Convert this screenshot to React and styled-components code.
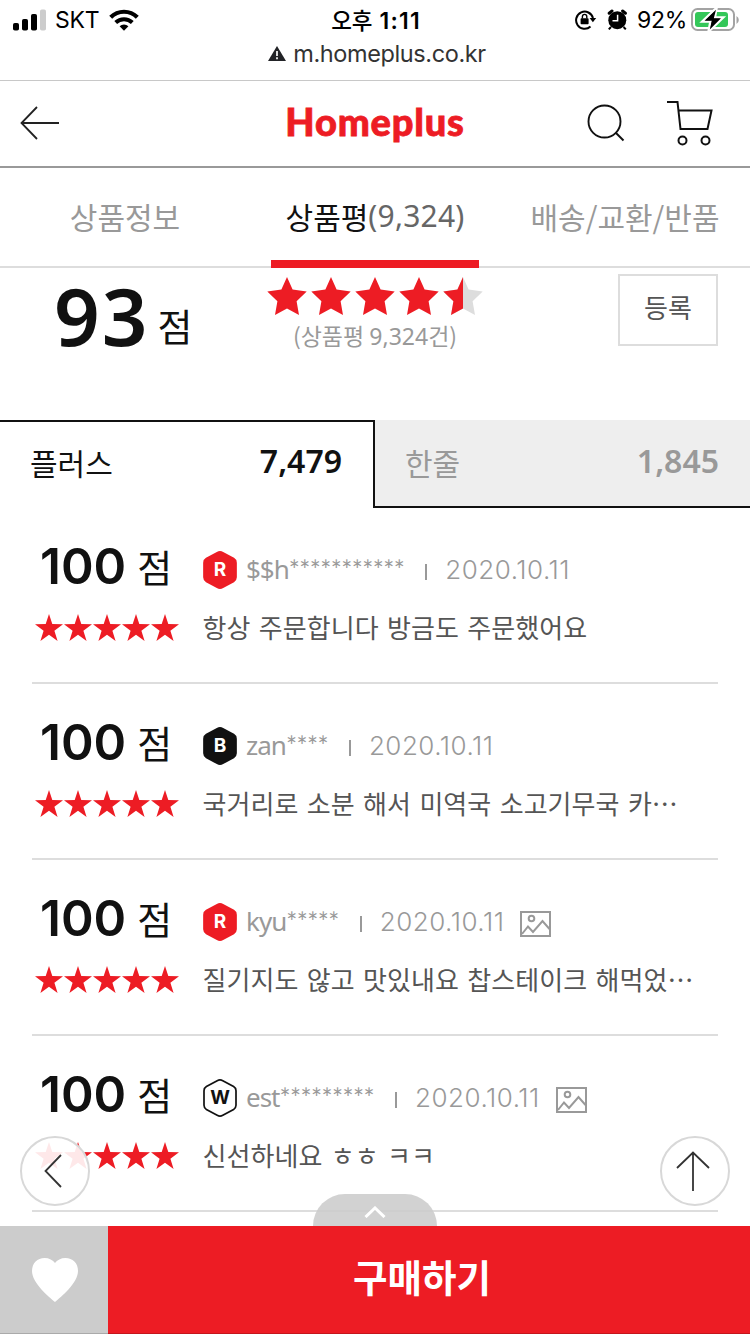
import styled, { createGlobalStyle, css } from 'styled-components'

const colors = {
	red: '#ed1c24',
	black: '#111',
	text: '#555',
	muted: '#999',
	line: '#ddd',
}

const kr = `'Noto Sans CJK KR', sans-serif`

const reviews = [
	{ grade: 'R', name: '$$h', hidden: 11, text: '항상 주문합니다 방금도 주문했어요' },
	{ grade: 'B', name: 'zan', hidden: 4, text: '국거리로 소분 해서 미역국 소고기무국 카⋯' },
	{
		grade: 'R',
		name: 'kyu',
		hidden: 5,
		photo: true,
		text: '질기지도 않고 맛있내요 찹스테이크 해먹었⋯',
	},
	{ grade: 'W', name: 'est', hidden: 9, photo: true, text: '신선하네요 ㅎㅎ ㅋㅋ' },
]

const starPoints = '14,0 17.3,10.1 28,10.3 19.4,16.7 22.6,27 14,20.8 5.4,27 8.6,16.7 0,10.3 10.7,10.1'
const bigStar = '20,0 25.6,12.4 39.7,14.4 29.6,24.2 32,38 20,31.4 8,38 10.4,24.2 0.3,14.4 14.4,12.4'

function SignalIcon() {
	return (
		<svg width="34" height="22" viewBox="0 0 34 22">
			<rect x="0" y="14" width="6" height="7.5" rx="1.8" />
			<rect x="9" y="10" width="6" height="11.5" rx="1.8" />
			<rect x="18" y="5" width="6" height="16.5" rx="1.8" />
			<rect x="27" y="0.5" width="6" height="21" rx="1.8" fill="#ccc" />
		</svg>
	)
}

function WifiIcon() {
	return (
		<svg width="30" height="22" viewBox="0 0 30 22">
			<path d="M1.7 8.2a19 19 0 0 1 26.6 0" fill="none" stroke="#000" strokeWidth="4.2" />
			<path d="M6.7 13.5a12 12 0 0 1 16.6 0" fill="none" stroke="#000" strokeWidth="4" />
			<path d="M10.6 17.3a6.6 6.6 0 0 1 8.8 0L15 21.8z" />
		</svg>
	)
}

function LockIcon() {
	return (
		<svg width="22" height="22" viewBox="0 0 22 22">
			<path d="M15.5 17.6A8.6 8.6 0 1 1 18 9" fill="none" stroke="#000" strokeWidth="2" />
			<path d="M14.6 9h6.6l-3.3 4.2z" />
			<rect x="5.6" y="9.2" width="8" height="6" rx="0.8" />
			<path d="M7.4 9.5V7.6a2.2 2.2 0 0 1 4.4 0v1.9" fill="none" stroke="#000" strokeWidth="1.4" />
		</svg>
	)
}

function AlarmIcon() {
	return (
		<svg width="21" height="22" viewBox="0 0 21 22">
			<circle cx="10.3" cy="11.2" r="9" />
			<path d="M2.2 4.2 5 2M18.400 4.200 15.600 2" stroke="#000" strokeWidth="3" strokeLinecap="round" />
			<path d="m4 18-2.2 2.4M16.6 18l2.2 2.4" stroke="#000" strokeWidth="2" />
			<path d="M10.6 5.8v6H5.5" fill="none" stroke="#fff" strokeWidth="1.5" />
		</svg>
	)
}

function BatteryIcon() {
	return (
		<svg width="48" height="24" viewBox="0 0 48 24">
			<rect x="1" y="1" width="42" height="21" rx="5.5" fill="none" stroke="#a3a3a3" strokeWidth="2" />
			<path d="M45.5 8v8a4.6 4.6 0 0 0 0-8z" fill="#a3a3a3" />
			<rect x="4" y="4" width="33" height="15" rx="3" fill="#34c759" />
			<path d="M25.5 0 11.5 13.5h8L17.6 23.5 32 9.5h-8.2z" stroke="#fff" strokeWidth="2.6" />
			<path d="M25 1.8 13.5 12.8h7.3L18.8 21.5 30 10.3h-7.2z" />
		</svg>
	)
}

function Stars({ half }) {
	if (half) {
		return (
			<svg width="216" height="38" viewBox="0 0 216 38">
				{[0, 1, 2, 3].map((i) => (
					<polygon key={i} points={bigStar} fill={colors.red} transform={`translate(${i * 44} 0)`} />
				))}
				<polygon points={bigStar} fill="#ddd" transform="translate(176 0)" />
				<path d="M196 0v31.4L184 38l2.4-13.8-10.1-9.8 14.1-2z" fill={colors.red} />
			</svg>
		)
	}
	return (
		<svg width="144" height="27" viewBox="0 0 144 27">
			{[0, 1, 2, 3, 4].map((i) => (
				<polygon key={i} points={starPoints} fill={colors.red} transform={`translate(${i * 29} 0)`} />
			))}
		</svg>
	)
}

function PhotoIcon() {
	return (
		<svg width="31" height="26" viewBox="0 0 31 26" fill="none" stroke={colors.muted} strokeWidth="2">
			<rect x="1" y="1" width="29" height="24" />
			<circle cx="11.5" cy="7.5" r="2.8" />
			<path d="m2 23 6-7.5 5 5.5 9.5-11L29.5 18" />
		</svg>
	)
}

function Badge({ grade }) {
	const fill = { R: colors.red, B: colors.black, W: '#fff' }[grade]
	const outline = grade === 'W'
	return (
		<Grade $outline={outline}>
			<svg width="34" height="38" viewBox="0 0 34 38">
				<path
					d="M14.2 1.7Q17 .2 19.8 1.7L30.6 7.6Q33 9 33 11.7V26.3Q33 29 30.6 30.4L19.8 36.3Q17 37.8 14.2 36.3L3.4 30.4Q1 29 1 26.3V11.7Q1 9 3.4 7.6Z"
					fill={fill}
					stroke={outline ? colors.black : fill}
					strokeWidth="1.7"
				/>
			</svg>
			<span>{grade}</span>
		</Grade>
	)
}

function Review({ grade, name, hidden, photo, text }) {
	return (
		<Row>
			<Score>
				<strong>100</strong>
				<span>점</span>
			</Score>
			<Meta>
				<Badge grade={grade} />
				<Name>{name}</Name>
				<Mask>{'*'.repeat(hidden)}</Mask>
				<Bar />
				<time>2020.10.11</time>
				{photo && <PhotoIcon />}
			</Meta>
			<StarCell>
				<Stars />
			</StarCell>
			<Comment>{text}</Comment>
		</Row>
	)
}

export default function App() {
	return (
		<Page>
			<GlobalStyle />
			<Status>
				<Carrier>
					<SignalIcon />
					<span>SKT</span>
					<WifiIcon />
				</Carrier>
				<Clock>
					<span>오후</span> 1:11
				</Clock>
				<Power>
					<LockIcon />
					<AlarmIcon />
					<span>92%</span>
					<BatteryIcon />
				</Power>
			</Status>
			<Address>
				<svg width="18" height="15" viewBox="0 0 18 15">
					<path d="M9 0 18 15H0z" fill="#222327" />
					<path d="M9 5v5M9 11.3v2" stroke="#fff" strokeWidth="1.7" />
				</svg>
				<span>m.homeplus.co.kr</span>
			</Address>

			<Header>
				<IconButton aria-label="뒤로">
					<svg width="40" height="34" viewBox="0 0 40 34" fill="none" stroke="#222" strokeWidth="1.8">
						<path d="M17 1 1.5 17 17 33M1.5 17H39" />
					</svg>
				</IconButton>
				<Logo>Homeplus</Logo>
				<Tools>
					<svg width="38" height="38" viewBox="0 0 38 38" fill="none" stroke="#111" strokeWidth="1.9">
						<circle cx="17.5" cy="17.5" r="16" />
						<path d="m28.5 28.5 8 8" />
					</svg>
					<svg width="46" height="46" viewBox="0 0 46 46" fill="none" stroke="#111" strokeWidth="2">
						<path d="M0 2h10.5l3 27h27l4-18.5H11.5" />
						<circle cx="15.5" cy="40.5" r="4" />
						<circle cx="38.5" cy="40.5" r="4" />
					</svg>
				</Tools>
			</Header>

			<Tabs>
				<Tab>상품정보</Tab>
				<Tab $active>
					상품평<em>(9,324)</em>
				</Tab>
				<Tab>배송/교환/반품</Tab>
			</Tabs>

			<Summary>
				<Total>
					<strong>93</strong>
					<span>점</span>
				</Total>
				<Rating>
					<Stars half />
					<p>
						(상품평 <span>9,324</span>건)
					</p>
				</Rating>
				<Write>등록</Write>
			</Summary>

			<Kinds>
				<Kind $active>
					<span>플러스</span>
					<strong>7,479</strong>
				</Kind>
				<Kind>
					<span>한줄</span>
					<strong>1,845</strong>
				</Kind>
			</Kinds>

			<List>
				{reviews.map((review) => (
					<Review key={review.name} {...review} />
				))}
			</List>

			<Bottom>
				<Round $side="left">
					<svg width="18" height="34" viewBox="0 0 18 34" fill="none" stroke="#333" strokeWidth="1.8">
						<path d="M17 1 1.5 17 17 33" />
					</svg>
				</Round>
				<Round $side="right">
					<svg width="34" height="40" viewBox="0 0 34 40" fill="none" stroke="#333" strokeWidth="1.8">
						<path d="M1 17 17 1.5 33 17M17 1.5V40" />
					</svg>
				</Round>
				<Handle>
					<svg width="22" height="12" viewBox="0 0 22 12" fill="none" stroke="#fff" strokeWidth="3">
						<path d="m1.5 11 9.5-9 9.5 9" />
					</svg>
				</Handle>
				<Like aria-label="찜하기">
					<svg width="46" height="44" viewBox="0 0 46 44">
						<path
							d="M23 44C17 39 0 25 0 13 0 5 5.5 0 12.5 0 17 0 21 2 23 5 25 2 29 0 33.5 0 40.5 0 46 5 46 13 46 25 29 39 23 44z"
							fill="#fff"
						/>
					</svg>
				</Like>
				<Buy>구매하기</Buy>
			</Bottom>
		</Page>
	)
}

const GlobalStyle = createGlobalStyle`
	* {
		box-sizing: border-box;
	}

	body {
		margin: 0;
		background: #fff;
	}

	p {
		margin: 0;
	}

	svg {
		display: block;
		flex: none;
	}

	button {
		border: 0;
		padding: 0;
		background: none;
		font: inherit;
	}
`

const Page = styled.div`
	position: relative;
	display: flex;
	flex-direction: column;
	width: 750px;
	height: 1334px;
	overflow: hidden;
	font-family: ${kr};
	color: ${colors.black};
	white-space: nowrap;
`

const Status = styled.div`
	display: grid;
	grid-template-columns: 1fr auto 1fr;
	height: 40px;
	padding: 0 11px 0 13px;
	font: 400 23px/40px Inter, sans-serif;
	color: #000;
`

const Carrier = styled.div`
	display: flex;
	align-items: center;

	span {
		margin: 0 10px 0 8px;
		letter-spacing: -0.2px;
	}
`

const Clock = styled.div`
	font-weight: 600;
	font-size: 23px;
	letter-spacing: 1.2px;
	line-height: 38px;

	span {
		font-family: ${kr};
		font-size: 22.5px;
		font-weight: 500;
		letter-spacing: 0;
	}
`

const Power = styled.div`
	display: flex;
	align-items: center;
	justify-content: flex-end;

	span {
		margin: 0 4px 0 9px;
		letter-spacing: -0.3px;
	}

	svg + svg {
		margin-left: 10px;
	}
`

const Address = styled.div`
	display: flex;
	align-items: center;
	justify-content: center;
	gap: 7px;
	height: 41px;
	padding: 0 0 13px 4px;
	border-bottom: 1px solid #c8c8c8;
	font: 400 23.5px/27px Inter, sans-serif;
	letter-spacing: -0.4px;
	color: #333;
`

const Header = styled.header`
	display: grid;
	grid-template-columns: 1fr auto 1fr;
	align-items: center;
	height: 87px;
	padding: 0 37px 2px 20px;
	border-bottom: 2px solid #999;
`

const IconButton = styled.button`
	justify-self: start;
`

const Logo = styled.h1`
	margin: 0 0 3px 17px;
	font: 900 38px/60px Lato, sans-serif;
	letter-spacing: 0.8px;
	-webkit-text-stroke: 0.8px ${colors.red};
	color: ${colors.red};
`

const Tools = styled.div`
	display: flex;
	align-items: center;
	justify-content: flex-end;
	gap: 42px;
`

const Tabs = styled.nav`
	display: grid;
	grid-template-columns: repeat(3, 1fr);
	height: 100px;
	border-bottom: 2px solid ${colors.line};
`

const Tab = styled.div`
	display: flex;
	justify-content: center;
	height: 100px;
	font-size: 30px;
	line-height: 96px;
	color: ${colors.muted};

	${({ $active }) =>
		$active &&
		css`
			width: 208px;
			margin: 0 auto;
			border-bottom: 8px solid ${colors.red};
			color: ${colors.black};
		`}

	em {
		font-family: 'Noto Sans', sans-serif;
		font-style: normal;
		letter-spacing: 0.2px;
		color: #666;
	}
`

const Summary = styled.section`
	display: grid;
	grid-template-columns: 1fr auto 1fr;
	align-items: start;
	height: 152px;
	padding: 6px 32px 0;
`

const Total = styled.div`
	display: flex;
	padding-left: 22px;

	strong {
		font: 600 80px/82px 'Noto Sans', sans-serif;
		letter-spacing: 2px;
	}

	span {
		margin-left: 8px;
		font-size: 38px;
		line-height: 101px;
	}
`

const Rating = styled.div`
	padding-top: 3px;

	p {
		font-size: 23px;
		line-height: 40px;
		text-align: center;
		color: ${colors.muted};
	}

	span {
		font-family: 'Noto Sans', sans-serif;
	}
`

const Write = styled.button`
	justify-self: end;
	width: 100px;
	height: 72px;
	border: 2px solid ${colors.line};
	padding-bottom: 7px;
	font-size: 26px;
	color: ${colors.text};
`

const Kinds = styled.div`
	display: grid;
	grid-template-columns: 1fr 1fr;
	height: 88px;
`

const Kind = styled.div`
	display: flex;
	justify-content: space-between;
	padding: 0 31px 0 30px;
	border-bottom: 2px solid ${colors.black};
	background: #eee;
	font-size: 30px;
	line-height: 84px;
	color: ${colors.muted};

	strong {
		font: 600 32px/82px 'Noto Sans', sans-serif;
	}

	${({ $active }) =>
		$active &&
		css`
			border: solid ${colors.black};
			border-width: 2px 2px 0 0;
			background: #fff;
			color: ${colors.black};
			line-height: 80px;

			strong {
				line-height: 78px;
			}
		`}
`

const List = styled.section`
	padding: 0 32px;
`

const Row = styled.article`
	display: grid;
	grid-template-columns: 170px 1fr;
	grid-template-rows: 60px 60px;
	height: 176px;
	padding-top: 30px;
	border-bottom: 2px solid ${colors.line};
`

const Score = styled.div`
	display: flex;
	padding-left: 8px;
	line-height: 56px;

	strong {
		font: 600 49.5px/57px Inter, sans-serif;
	}

	span {
		margin-left: 11px;
		font-size: 38px;
	}
`

const Meta = styled.div`
	display: flex;
	align-items: center;
	padding: 3px 0 0 1px;
	height: 61px;
	font: 400 26px/58px 'Noto Sans', sans-serif;
	color: ${colors.muted};

	time {
		font-family: Inter, sans-serif;
		font-weight: 350;
		letter-spacing: 0.5px;
	}

	time + svg {
		margin: 3px 0 0 16px;
	}
`

const Grade = styled.div`
	display: grid;
	place-items: center;
	margin-right: 9px;
	font: 700 19px/38px Inter, sans-serif;
	color: ${({ $outline }) => ($outline ? colors.black : '#fff')};

	svg,
	span {
		grid-area: 1 / 1;
	}

	span {
		z-index: 1;
	}
`

const Name = styled.span`
	margin-top: -3px;
	letter-spacing: -1px;
`

const Mask = styled.span`
	font-family: Lato, sans-serif;
	letter-spacing: -0.55px;
`

const Bar = styled.i`
	width: 2px;
	height: 16px;
	margin: 4px 18px 0 21px;
	background: ${colors.muted};
`

const StarCell = styled.div`
	padding: 16px 0 0 3px;
`

const Comment = styled.p`
	padding-left: 0.5px;
	font-size: 26px;
	line-height: 58px;
	letter-spacing: 0.05px;
	word-spacing: 2.5px;
	color: ${colors.text};
`

const Bottom = styled.footer`
	position: absolute;
	inset: auto 0 0;
	display: flex;
	height: 108px;
`

const Round = styled.button`
	position: absolute;
	bottom: 128px;
	${({ $side }) => $side}: 20px;
	display: grid;
	place-items: center;
	width: 70px;
	height: 70px;
	border: 2px solid #d8d8d8;
	border-radius: 50%;
	padding: 0 4px 1px 0;
	background: rgba(255, 255, 255, 0.9);
`

const Handle = styled.div`
	position: absolute;
	bottom: 108px;
	left: 313px;
	display: flex;
	justify-content: center;
	width: 124px;
	height: 32px;
	border-radius: 32px 32px 0 0;
	padding-top: 12px;
	background: rgba(204, 204, 204, 0.88);
`

const Like = styled.button`
	display: grid;
	place-items: center;
	width: 108px;
	border-bottom: 1px solid #aaa;
	padding-left: 2px;
	background: #ccc;
`

const Buy = styled.button`
	flex: 1;
	border-bottom: 1px solid #c4161c;
	padding: 0 14px 8px 0;
	background: ${colors.red};
	font-size: 37.5px;
	font-weight: 700;
	color: #fff;
`
